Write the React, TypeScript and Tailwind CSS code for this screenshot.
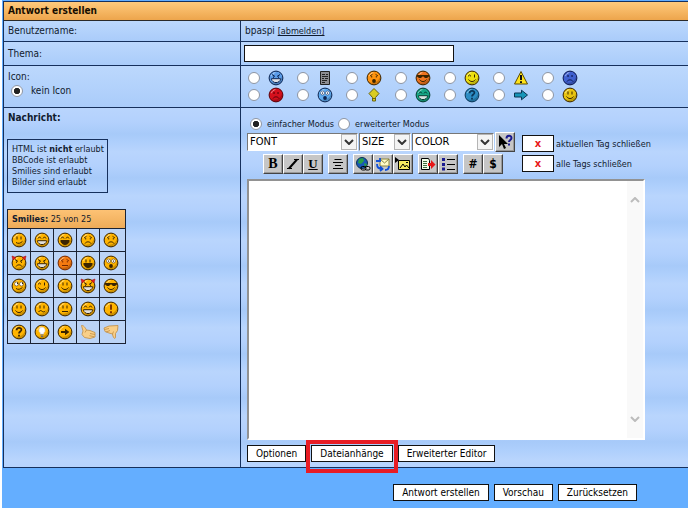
import type { ReactNode } from "react";

type Face = {
  fill?: string;
  dark?: string;
  eyes?: "line" | "dot" | "happy" | "sad" | "wide" | "angry" | "roll" | "shades" | "wink";
  mouth?: "smile" | "grin" | "laugh" | "frown" | "flat" | "open" | "wavy" | "smirk";
  horns?: boolean;
  symbol?: "!" | "?" | "arrow" | "bulb";
};

function Smiley({ fill = "#ffb400", dark = "#3a2400", eyes = "line", mouth = "smile", horns, symbol }: Face) {
  return (
    <svg viewBox="0 0 16 16" className="block size-4" fill="none" stroke={dark} strokeWidth="1" aria-hidden="true">
      <circle cx="8" cy="8" r="6.900" fill={fill} stroke={dark} strokeWidth="1" />
      <path d="M3 12.200a6.200 6.200 0 0 0 10.600-1.400 6.200 6.200 0 0 0 .4-4.600C13.600 10 9 14 3 12.200Z" fill="#000" fillOpacity=".2" stroke="none" />
      <path d="M3.400 6.200C4 4 5.600 2.900 7.400 2.600" stroke="#fff" strokeOpacity=".5" />
      {horns && <path d="M1 1l1 4 3-2.400ZM15 1l-1 4-3-2.400Z" fill="#e82020" stroke="#a01010" strokeWidth=".6" />}
      {symbol === "!" && <path d="M8 3.500v5.200M8 10.300v2" stroke="#7a3000" strokeWidth="1.900" />}
      {symbol === "?" && <path d="M5.600 6.200C5.600 3 10.600 3.200 10.400 6 10.200 7.600 8 7.600 8 9.500M8 10.800v1.800" stroke={dark} strokeWidth="1.800" />}
      {symbol === "arrow" && <path d="M4 7h4V4.800L12.400 8 8 11.200V9H4Z" fill={dark} stroke="none" />}
      {symbol === "bulb" && (
        <>
          <path d="M8 3.200a3.100 3.100 0 0 0-1.600 5.700V10h3.200V8.900A3.100 3.100 0 0 0 8 3.200Z" fill="#fff" stroke="#d8d8e8" strokeWidth=".7" />
          <path d="M6.500 11h3M7 12.500h2" stroke="#667" />
        </>
      )}
      {!symbol && (
        <>
          {eyes === "line" && <path d="M6 4.500v3M10 4.500v3" />}
          {eyes === "dot" && <path d="M5.300 6h1.500M9.300 6h1.500" strokeWidth="1.600" />}
          {eyes === "happy" && <path d="M4 6.500l1.500-1.700L7 6.500M9 6.500l1.500-1.700L12 6.500" />}
          {eyes === "wink" && <path d="M4 6.300l1.500-1.300L7 6.300M10.500 4.500v3" />}
          {eyes === "sad" && <path d="M4 6l2.500-1.700M12 6L9.500 4.300M5.700 6v1.500M10.300 6v1.500" strokeWidth=".9" />}
          {eyes === "angry" && <path d="M4 4.500l3 2M12 4.500l-3 2M5.500 6.500v1.300M10.500 6.500v1.300" />}
          {(eyes === "wide" || eyes === "roll") && (
            <>
              <circle cx="5.500" cy="6" r="2" fill="#fff" strokeWidth=".5" />
              <circle cx="10.500" cy="6" r="2" fill="#fff" strokeWidth=".5" />
              <path d={eyes === "wide" ? "M5.500 5.500v1.200M10.500 5.500v1.200" : "M6.500 4.500v1.600M11.500 4.500v1.600"} />
            </>
          )}
          {eyes === "shades" && <path d="M2 5h12v1.500l-2 1.500h-2L8.500 6.500h-1L6 8H4L2 6.500Z" fill={dark} stroke="none" />}
          {mouth === "smile" && <path d="M4.500 9.500c1.700 2.700 5.300 2.700 7 0" />}
          {mouth === "smirk" && <path d="M5 10.500c2 1.400 4.500 1 6.500-1.200" />}
          {mouth === "grin" && (
            <>
              <path d="M3.500 8.700h9c-.3 5.200-8.700 5.200-9 0Z" fill="#fff" />
              <path d="M6 9v2.800M8 9v3.300M10 9v2.800" strokeWidth=".3" />
            </>
          )}
          {mouth === "laugh" && <path d="M3.800 8.500h8.400c-.2 5.300-8.200 5.300-8.400 0Z" fill={dark} />}
          {mouth === "frown" && <path d="M5 11.500c1.300-2.200 4.700-2.200 6 0" />}
          {mouth === "flat" && <path d="M5 10.500h6" />}
          {mouth === "wavy" && <path d="M4.500 11c1.500-2 2.700-1.500 3.700-.6s2 .5 3-.4" />}
          {mouth === "open" && <ellipse cx="8" cy="11" rx="1.900" ry="2" fill={dark} stroke="none" />}
        </>
      )}
    </svg>
  );
}

function Thumb({ down = false }: { down?: boolean }) {
  return (
    <svg viewBox="0 0 16 16" className="block size-4" fill="none" stroke="#c08c40" strokeWidth=".8" aria-hidden="true">
      {down ? (
        <>
          <path d="M1 4L6 2 15 1.500 14.500 6.500 12.500 9.500V13.500C12 15.500 10 14 9.500 10L6 9 2 7.500Z" fill="#f9cf88" />
          <path d="M1.500 5.500L6 4.500M3 8L7 6.500M9.500 10l1-2.500" />
        </>
      ) : (
        <>
          <path d="M1.500 1.500C3.500 1 5 3.500 6.500 6L10 6.500 15 8.500V13L10 14.500 4.500 13.500 2 10.500 3 7Z" fill="#f9cf88" />
          <path d="M15 10.500L10 9.500M14 12.700L9.500 11.700M6.500 6L5 8.500" />
        </>
      )}
    </svg>
  );
}

const smilies: { name: string; art: ReactNode }[] = [
  { name: "smile", art: <Smiley mouth="smirk" /> },
  { name: "biggrin", art: <Smiley eyes="happy" mouth="grin" /> },
  { name: "lol", art: <Smiley eyes="happy" mouth="laugh" /> },
  { name: "sad", art: <Smiley eyes="sad" mouth="frown" /> },
  { name: "frown", art: <Smiley eyes="sad" mouth="frown" /> },
  { name: "evil", art: <Smiley eyes="angry" mouth="frown" horns /> },
  { name: "mad", art: <Smiley eyes="angry" mouth="grin" /> },
  { name: "red", art: <Smiley fill="#f47a10" dark="#742800" eyes="sad" mouth="flat" /> },
  { name: "tongue", art: <Smiley mouth="laugh" /> },
  { name: "eek", art: <Smiley eyes="wide" mouth="open" /> },
  { name: "rolleyes", art: <Smiley eyes="roll" mouth="smirk" /> },
  { name: "wink", art: <Smiley eyes="wink" mouth="smile" /> },
  { name: "happy", art: <Smiley mouth="smile" /> },
  { name: "devil", art: <Smiley eyes="angry" mouth="grin" horns /> },
  { name: "cool", art: <Smiley eyes="shades" mouth="smile" /> },
  { name: "pleased", art: <Smiley mouth="smile" /> },
  { name: "confused", art: <Smiley eyes="line" mouth="wavy" /> },
  { name: "neutral", art: <Smiley mouth="flat" /> },
  { name: "teeth", art: <Smiley eyes="happy" mouth="grin" /> },
  { name: "exclamation", art: <Smiley symbol="!" /> },
  { name: "question", art: <Smiley symbol="?" /> },
  { name: "idea", art: <Smiley symbol="bulb" /> },
  { name: "arrow", art: <Smiley symbol="arrow" /> },
  { name: "thumbs up", art: <Thumb /> },
  { name: "thumbs down", art: <Thumb down /> },
];

const postIcons: { name: string; art: ReactNode }[] = [
  { name: "böse", art: <Smiley fill="#5b9ce8" dark="#0c2450" eyes="angry" mouth="grin" /> },
  {
    name: "Text",
    art: (
      <svg viewBox="0 0 16 16" className="block size-4" aria-hidden="true">
        <path d="M3.500 1.500h9v13h-9Z" fill="#8d8d92" stroke="#222" />
        <path d="M5 4.500h3M9 4.500h2M5 6.500h6M5 8.500h2M8 8.500h3M5 10.500h5M5 12.500h3" stroke="#222" />
      </svg>
    ),
  },
  { name: "überrascht", art: <Smiley fill="#ff9410" eyes="sad" mouth="open" /> },
  { name: "cool", art: <Smiley fill="#ee7420" eyes="shades" mouth="smile" /> },
  { name: "Augenzwinkern", art: <Smiley fill="#ecdf10" eyes="wink" mouth="smile" /> },
  {
    name: "Achtung",
    art: (
      <svg viewBox="0 0 16 16" className="block size-4" aria-hidden="true">
        <path d="M8 1.500L14.500 14h-13Z" fill="#ffe31a" stroke="#5b4a00" strokeLinejoin="round" />
        <path d="M8 5v5M8 11.200v1.700" stroke="#111" strokeWidth="2" />
      </svg>
    ),
  },
  { name: "traurig", art: <Smiley fill="#3f60cf" dark="#0c1850" eyes="dot" mouth="frown" /> },
  { name: "wütend", art: <Smiley fill="#d4101c" dark="#5a0008" eyes="dot" mouth="frown" /> },
  { name: "geschockt", art: <Smiley fill="#60acf0" dark="#0c2450" eyes="wide" mouth="open" /> },
  {
    name: "Idee",
    art: (
      <svg viewBox="0 0 16 16" className="block size-4" aria-hidden="true">
        <path d="M8 1.500L13 6.500 9.500 10.500V14H6.500v-3.500L3 6.500Z" fill="#d9cc20" stroke="#6a6410" />
        <path d="M6.500 11.500h3" stroke="#6a6410" />
      </svg>
    ),
  },
  { name: "großes Grinsen", art: <Smiley fill="#18a888" dark="#053c30" eyes="happy" mouth="grin" /> },
  { name: "Frage", art: <Smiley fill="#2c8cc4" dark="#0a3658" symbol="?" /> },
  {
    name: "Pfeil",
    art: (
      <svg viewBox="0 0 16 16" className="block size-4" aria-hidden="true">
        <path d="M1.500 6h7V3.200L14.500 8l-6 4.800V10h-7Z" fill="#1795b8" stroke="#0b3550" />
      </svg>
    ),
  },
  { name: "fröhlich", art: <Smiley fill="#e8c410" eyes="line" mouth="smile" /> },
];

const radioClass =
  "m-0 size-3 shrink-0 appearance-none rounded-full border border-[#8d95a3] bg-white checked:bg-[radial-gradient(circle,#222_40%,white_50%)]";

function Chevron({ up = false }: { up?: boolean }) {
  return (
    <svg viewBox="0 0 10 6" className="h-1.5 w-2.5" fill="none" stroke="currentColor" strokeWidth="2" aria-hidden="true">
      <path d={up ? "M1 5l4-4 4 4" : "M1 1l4 4 4-4"} />
    </svg>
  );
}

function TagSelect({ label, width }: { label: string; width: string }) {
  return (
    <div className={`relative ${width}`}>
      <select
        aria-label={label}
        className="block h-[18px] w-full appearance-none border border-white border-t-[#777] border-l-[#777] bg-white pl-[2px] text-[11px] leading-4 text-black"
      >
        <option>{label}</option>
      </select>
      <span className="pointer-events-none absolute inset-y-px right-px flex w-4 items-center justify-center border border-[#b5b5b5] bg-[#f4f4f4] text-[#333]">
        <Chevron />
      </span>
    </div>
  );
}

function Tool({ label, children }: { label: string; children: ReactNode }) {
  return (
    <button
      type="button"
      aria-label={label}
      className="flex h-5 w-5 items-center justify-center border border-t-white border-l-white border-r-[#444] border-b-[#444] bg-[#c6c6c6] text-black shadow-[inset_-1px_-1px_#999]"
    >
      {children}
    </button>
  );
}

function Art({ children }: { children: ReactNode }) {
  return (
    <svg viewBox="0 0 16 16" className="block size-4" fill="none" stroke="#000" aria-hidden="true">
      {children}
    </svg>
  );
}

function PlainButton({ children }: { children: ReactNode }) {
  return (
    <button type="button" className="h-[17px] border border-[#111] bg-white px-2 text-[10px] leading-[15px] whitespace-nowrap text-black">
      {children}
    </button>
  );
}

function CloseTag({ id, label }: { id: string; label: string }) {
  return (
    <div className="flex items-center gap-[2px]">
      <button id={id} type="button" className="h-[17px] w-8 border border-[#111] bg-white text-[11px] leading-[14px] font-bold text-[#e81818]">
        x
      </button>
      <label htmlFor={id} className="text-[9px] whitespace-nowrap">
        {label}
      </label>
    </div>
  );
}

const cell = "border-b border-[#16305c] bg-[linear-gradient(#bcd8fd,#aaccfa)] px-1";
const striped =
  "border-b border-[#16305c] bg-[repeating-linear-gradient(#b9d5fd_0px,#b3d1fd_14px,#a7caf9_26px,#aecffc_34px,#b9d5fd_44px)] px-[3px]";

export default function App() {
  return (
    <main className="bg-white pb-[3px] pl-[2px] font-['DejaVu_Sans_Condensed','DejaVu_Sans',sans-serif] text-[10px] leading-[14px] text-[#111b2e]">
      <form className="bg-[#64aeff] pt-px pl-px">
        <div className="border-t border-l border-[#16305c]">
          <h1 className="h-[19px] border-b border-[#2a2a2a] bg-[linear-gradient(#ffca7c,#eda54c)] px-1 text-[10px] leading-[18px] font-bold text-[#160d00]">
            Antwort erstellen
          </h1>
          <div className="grid grid-cols-[237px_1fr]">
            <div className={`${cell} border-r py-[2px] leading-[15px]`}>Benutzername:</div>
            <div className={`${cell} py-[2px] leading-[15px]`}>
              bpaspi{" "}
              <a href="#abmelden" className="text-[9px] underline">
                [abmelden]
              </a>
            </div>

            <div className={`${cell} flex h-6 items-center border-r`}>
              <label htmlFor="subject">Thema:</label>
            </div>
            <div className={`${cell} flex h-6 items-center pl-[3px]`}>
              <input id="subject" type="text" className="h-[17px] w-[210px] border border-[#111] bg-white px-1" />
            </div>

            <div className={`${cell} border-r pt-1`}>
              <p>Icon:</p>
              <label className="flex items-center gap-2 pl-[3px]">
                <input type="radio" name="icon" defaultChecked className={radioClass} />
                kein Icon
              </label>
            </div>
            <div className={`${cell} h-[42px] py-1 pl-[7px]`}>
              <div className="grid w-fit grid-cols-7 gap-x-[13px] gap-y-px">
                {postIcons.map((i) => (
                  <label key={i.name} className="flex w-9 items-center gap-2">
                    <input type="radio" name="icon" aria-label={i.name} className={radioClass} />
                    {i.art}
                  </label>
                ))}
              </div>
            </div>

            <div className={`${striped} border-r pt-[3px]`}>
              <h2 className="pl-px text-[10px] font-bold">Nachricht:</h2>
              <p className="mt-[14px] w-fit border border-[#16305c] py-1 pr-[3px] pl-1 text-[9px] leading-[11px]">
                HTML ist <b>nicht</b> erlaubt
                <br />
                BBCode ist erlaubt
                <br />
                Smilies sind erlaubt
                <br />
                Bilder sind erlaubt
              </p>
              <section className="mt-4 w-[119px] border border-[#1a2233] bg-[#1a2233]">
                <h3 className="h-[18px] bg-[linear-gradient(#fdc274,#eeab58)] pl-1 text-[9px] leading-[18px]">
                  <b>Smilies:</b> 25 von 25
                </h3>
                <div className="mt-px grid grid-cols-[22px_22px_22px_22px_1fr] gap-px">
                  {smilies.map((s) => (
                    <button key={s.name} type="button" aria-label={s.name} className="flex h-[22px] items-center bg-[#bcd4f6] pl-[3px]">
                      {s.art}
                    </button>
                  ))}
                </div>
              </section>
            </div>

            <div className={`${striped} pt-2 pb-[5px]`}>
              <div className="flex h-4 items-center gap-1 pl-[6px] text-[9px]">
                <label className="flex items-center gap-[5px]">
                  <input type="radio" name="mode" defaultChecked className={radioClass} />
                  einfacher Modus
                </label>
                <label className="flex items-center gap-[5px]">
                  <input type="radio" name="mode" className={radioClass} />
                  erweiterter Modus
                </label>
              </div>
              <div className="flex gap-[5px] pl-[3px]">
                <div className="w-[270px]">
                  <div className="flex h-5 items-center gap-px">
                    <TagSelect label="FONT" width="w-[111px]" />
                    <TagSelect label="SIZE" width="w-[52px]" />
                    <TagSelect label="COLOR" width="w-[82px]" />
                    <Tool label="Hilfe">
                      <Art>
                        <path d="M2 1v12l3-3 2 5 2-1-2-4h4Z" fill="#000" stroke="none" />
                        <path d="M9.500 4.500C9.500 1 14.500 1 14.500 4c0 2-2.500 2-2.500 4M12 9.500v2" stroke="#1a1a90" strokeWidth="2" />
                      </Art>
                    </Tool>
                  </div>
                  <div className="mt-[2px] flex gap-[5px] pl-4">
                    <div className="flex">
                      <Tool label="Fett">
                        <span className="font-['Liberation_Serif',serif] text-[14px] font-bold">B</span>
                      </Tool>
                      <Tool label="Kursiv">
                        <Art>
                          <path d="M9 3.500h5M2 12.500h5" />
                          <path d="M12 3.500l-8 9" strokeWidth="2" />
                        </Art>
                      </Tool>
                      <Tool label="Unterstrichen">
                        <span className="font-['Liberation_Serif',serif] text-[13px] font-bold underline">U</span>
                      </Tool>
                    </div>
                    <Tool label="Zentriert">
                      <Art>
                        <path d="M4.500 3.500h7M3 6.500h10M5 9.500h6M3 12.500h10" />
                      </Art>
                    </Tool>
                    <div className="flex">
                      <Tool label="Link">
                        <Art>
                          <circle cx="7" cy="7" r="5.500" fill="#1858b8" stroke="#0c3050" />
                          <path d="M4 3l4-1 1 3-3 3-3-1ZM9 7l3 1-2 4Z" fill="#28a048" stroke="none" />
                          <rect x="6" y="10.500" width="5" height="3.500" rx="1.500" />
                          <rect x="10" y="10.500" width="5" height="3.500" rx="1.500" />
                        </Art>
                      </Tool>
                      <Tool label="E-Mail">
                        <Art>
                          <path d="M5 3h9v7H5Z" fill="#fffbc8" stroke="#8a8440" />
                          <path d="M5 3l4.500 4L14 3" stroke="#8a8440" />
                          <path d="M1 5h4V2M2 8c0 4 2 5 5 5m-2-2.500L7.500 13 5 15M14 10c0 3-1 4-4 4" stroke="#1050d8" strokeWidth="1.800" />
                        </Art>
                      </Tool>
                      <Tool label="Bild">
                        <Art>
                          <path d="M3.500 4.500h11v9h-11Z" fill="#f5e960" />
                          <path d="M5 12l3-4 2 3 1.500-2L14 12M11 6.500h2" />
                          <path d="M0 1l4 3-4 3Z" fill="#000" stroke="none" />
                        </Art>
                      </Tool>
                    </div>
                    <div className="flex">
                      <Tool label="Zitat">
                        <Art>
                          <path d="M1.500 2.500h7l1 2v9h-8Z" fill="#f4ffe8" />
                          <path d="M3 5.500h4M3 7.500h4M3 9.500h4M3 11.500h4" stroke="#407040" />
                          <path d="M8 7h3V4l4.500 4.500L11 13v-3H8Z" fill="#e81818" stroke="none" />
                        </Art>
                      </Tool>
                      <Tool label="Liste">
                        <Art>
                          <path d="M2 3.500h3M2 8.500h3M2 13h3" stroke="#1a1a90" strokeWidth="3" />
                          <path d="M7 3.500h8M7 8.500h8M7 13.500h8" />
                        </Art>
                      </Tool>
                    </div>
                    <div className="flex">
                      <Tool label="Code">
                        <span className="text-[12px] font-bold">#</span>
                      </Tool>
                      <Tool label="PHP">
                        <span className="text-[12px] font-bold">$</span>
                      </Tool>
                    </div>
                  </div>
                </div>
                <div className="flex flex-col gap-[3px] pt-[3px]">
                  <CloseTag id="close-current" label="aktuellen Tag schließen" />
                  <CloseTag id="close-all" label="alle Tags schließen" />
                </div>
              </div>
              <div className="relative mt-[5px] ml-[3px] w-[398px]">
                <textarea
                  aria-label="Nachricht"
                  className="block h-[261px] w-full resize-none border-2 border-t-[#929292] border-r-white border-b-white border-l-[#929292] bg-white p-1"
                />
                <div className="pointer-events-none absolute inset-y-[2px] right-[2px] flex w-4 flex-col items-center justify-between bg-[#f9f9f9] py-4 text-[#bcbcbc]">
                  <Chevron up />
                  <Chevron />
                </div>
              </div>
              <div className="mt-[5px] ml-[3px] flex gap-[5px]">
                <PlainButton>Optionen</PlainButton>
                <div className="relative flex">
                  <PlainButton>Dateianhänge</PlainButton>
                  <div className="pointer-events-none absolute -inset-x-[5px] -top-[5px] -bottom-[11px] border-4 border-[#e81c24]" />
                </div>
                <PlainButton>Erweiterter Editor</PlainButton>
              </div>
            </div>
          </div>
        </div>
        <div className="flex justify-end gap-[5px] pt-4 pr-[51px] pb-[7px]">
          <PlainButton>Antwort erstellen</PlainButton>
          <PlainButton>Vorschau</PlainButton>
          <PlainButton>Zurücksetzen</PlainButton>
        </div>
      </form>
    </main>
  );
}
